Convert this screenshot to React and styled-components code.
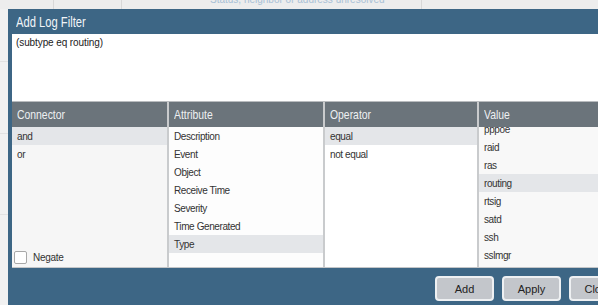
import React from 'react'
import styled, { createGlobalStyle } from 'styled-components'

const Global = createGlobalStyle`
  html, body { margin: 0; padding: 0; background: #ececec; overflow: hidden; }
  body { font-family: "Liberation Sans", Arial, sans-serif; }
`

const connectors = ['and', 'or']
const attributes = ['Description', 'Event', 'Object', 'Receive Time', 'Severity', 'Time Generated', 'Type']
const operators = ['equal', 'not equal']
const values = ['pppoe', 'raid', 'ras', 'routing', 'rtsig', 'satd', 'ssh', 'sslmgr']

function Column({ title, items, selected, bg, offset, children }) {
  return (
    <Col bg={bg}>
      <ColHead><Narrow>{title}</Narrow></ColHead>
      <ColBody>
        <List style={offset ? { marginTop: -offset } : undefined}>
          {items.map(item => (
            <Row key={item} active={item === selected}>{item}</Row>
          ))}
        </List>
        {children}
      </ColBody>
    </Col>
  )
}

export default function App() {
  return (
    <Page>
      <Global />
      <TopStrip>
        <TopCell w="53px" />
        <TopCell w="67px" />
        <TopCell w="299px"><Faint>Status, neighbor or address unresolved</Faint></TopCell>
        <TopCell w="200px" />
      </TopStrip>
      <Main>
        <Side />
        <Dialog>
          <Title><Narrow>Add Log Filter</Narrow></Title>
          <Expression>(subtype eq routing)</Expression>
          <Columns>
            <Column title="Connector" items={connectors} selected="and" bg="#f6f6f6">
              <Negate>
                <Box />
                Negate
              </Negate>
            </Column>
            <Column title="Attribute" items={attributes} selected="Type" bg="#fdfdfd" />
            <Column title="Operator" items={operators} selected="equal" bg="#ffffff" />
            <Column title="Value" items={values} selected="routing" bg="#f8f8f8" offset={7} />
          </Columns>
          <Footer>
            <Button>Add</Button>
            <Button>Apply</Button>
            <Button>Close</Button>
          </Footer>
        </Dialog>
      </Main>
    </Page>
  )
}

const Page = styled.div`
  width: 598px;
  height: 305px;
  display: flex;
  flex-direction: column;
  overflow: hidden;
`
const TopStrip = styled.div`
  height: 9px;
  display: flex;
  background: #ededed;
  flex-shrink: 0;
`
const TopCell = styled.div`
  width: ${p => p.w};
  flex-shrink: 0;
  border-right: 1px solid #d8d8d8;
  display: flex;
  align-items: flex-end;
  overflow: hidden;
`
const Faint = styled.span`
  font-size: 10px;
  line-height: 10px;
  margin-left: 88px;
  margin-bottom: 4px;
  color: #a9c1d6;
  white-space: nowrap;
`
const Main = styled.div`
  display: flex;
  flex: 1;
  min-height: 0;
`
const Side = styled.div`
  width: 8px;
  flex-shrink: 0;
  background: linear-gradient(#f1f1f1 0 52px, #e2e2e2 52px 53px, #f1f1f1 53px 124px, #e2e2e2 124px 125px, #f1f1f1 125px 205px, #e2e2e2 205px 206px, #f1f1f1 206px);
`
const Dialog = styled.div`
  width: 632px;
  flex-shrink: 0;
  background: #3d6685;
  display: flex;
  flex-direction: column;
  padding: 0 4px;
  box-sizing: border-box;
`
const Narrow = styled.span`
  display: inline-block;
  transform: scaleX(0.8);
  transform-origin: left center;
  white-space: nowrap;
`
const Title = styled.div`
  height: 25px;
  display: flex;
  align-items: center;
  padding-left: 4px;
  color: #f2f5f8;
  font-size: 14px;
`
const Expression = styled.div`
  height: 68px;
  background: #fff;
  border-bottom: 1px solid #b9bcbf;
  padding: 3px 4px;
  box-sizing: border-box;
  font-size: 10px;
  letter-spacing: -0.1px;
  color: #222;
`
const Columns = styled.div`
  display: grid;
  grid-template-columns: 155px 156px 154px 1fr;
  height: 166px;
  border-bottom: 1px solid #c4c6c8;
  box-sizing: border-box;
`
const Col = styled.div`
  display: flex;
  flex-direction: column;
  min-width: 0;
  background: ${p => p.bg};
  & + & { border-left: 2px solid #c9cbcd; }
`
const ColHead = styled.div`
  height: 25px;
  flex-shrink: 0;
  background: #6b747b;
  color: #eef0f2;
  display: flex;
  align-items: center;
  padding-left: 5px;
  font-size: 13px;
`
const ColBody = styled.div`
  flex: 1;
  position: relative;
  overflow: hidden;
`
const List = styled.div`
  display: flex;
  flex-direction: column;
`
const Row = styled.div`
  height: 18px;
  display: flex;
  align-items: center;
  padding-left: 5px;
  font-size: 10px;
  letter-spacing: -0.4px;
  color: #333;
  background: ${p => (p.active ? '#e4e6e9' : 'transparent')};
`
const Negate = styled.label`
  position: absolute;
  left: 2px;
  bottom: 3px;
  display: flex;
  align-items: center;
  gap: 6px;
  font-size: 10px;
  letter-spacing: -0.3px;
  color: #333;
`
const Box = styled.span`
  width: 11px;
  height: 11px;
  background: #fff;
  border: 1px solid #a8a8a8;
  border-radius: 2px;
`
const Footer = styled.div`
  display: flex;
  justify-content: flex-end;
  gap: 8px;
  padding: 8px 8px 0 0;
`
const Button = styled.button`
  width: 59px;
  height: 25px;
  background: #c3c6cb;
  border: 2px solid #eef0f2;
  border-radius: 4px;
  font-family: "Liberation Sans", Arial, sans-serif;
  font-size: 11px;
  color: #222;
  padding: 0;
`
